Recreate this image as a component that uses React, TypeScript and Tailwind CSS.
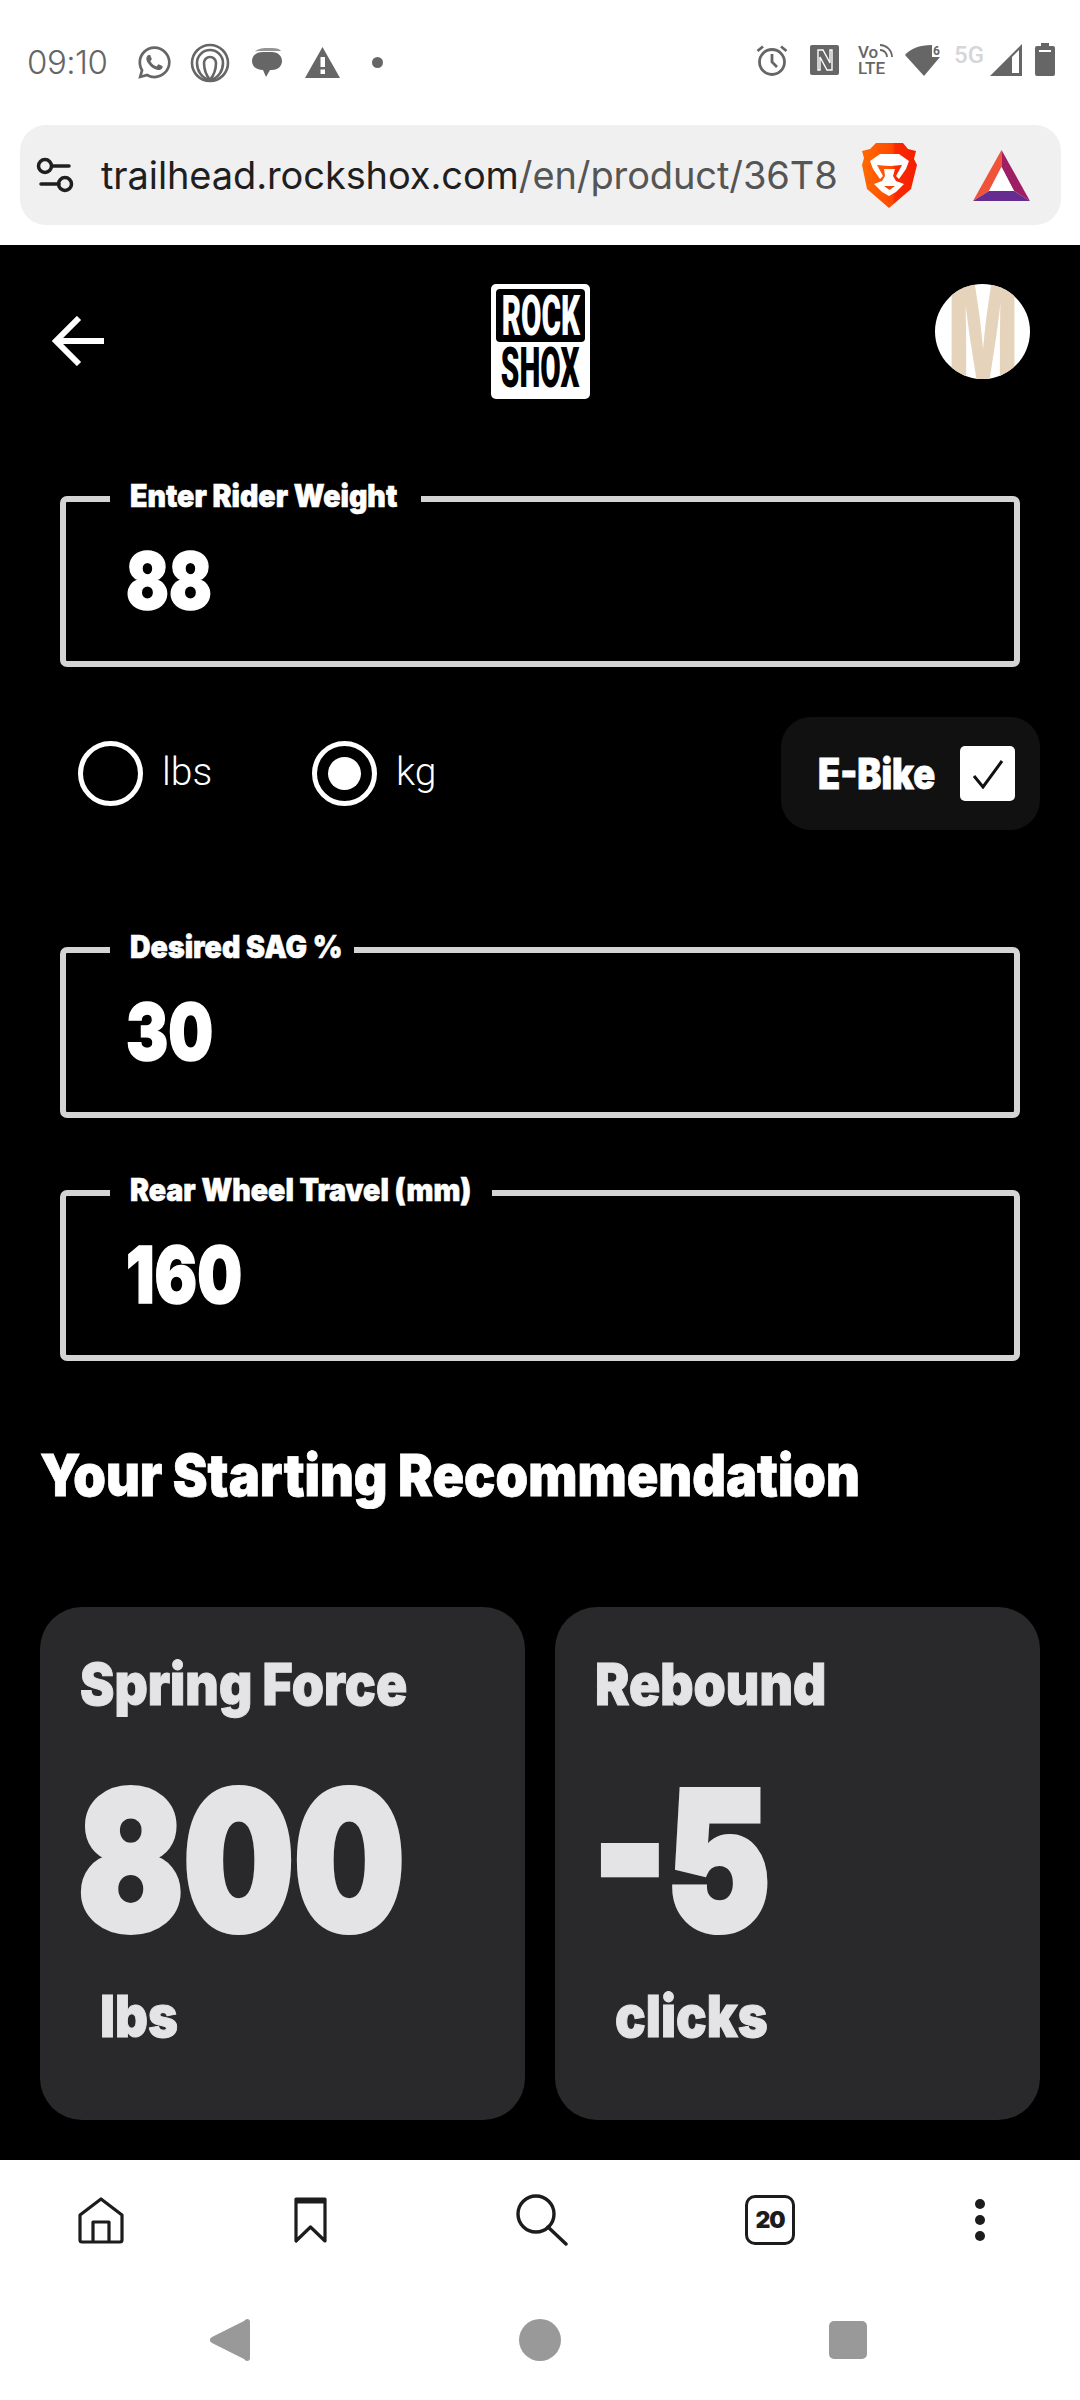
import { FaWhatsapp } from 'react-icons/fa'

const heavy = "font-['Inter',sans-serif] font-black"

function Field({ label, value, labelWidth, className }: { label: string; value: string; labelWidth: string; className: string }) {
  return (
    <div className={`relative h-[171px] rounded-[7px] border-[6px] border-[#d4d4d4] pl-[60px] pt-[36px] ${className}`}>
      {/* label sits over the top border and cuts it */}
      <div className={`absolute -top-[25px] left-[44px] h-[42px] bg-black ${labelWidth}`}>
        <span className={`${heavy} ml-[20px] inline-block origin-left scale-x-[0.92] whitespace-nowrap text-[31px] leading-[38px] text-white [-webkit-text-stroke:0.6px_currentColor]`}>{label}</span>
      </div>
      <span className={`${heavy} inline-block origin-left scale-x-[0.8] text-[79px] leading-[85px] text-white [-webkit-text-stroke:1.5px_currentColor]`}>{value}</span>
    </div>
  )
}

function Radio({ label, checked, className }: { label: string; checked?: boolean; className: string }) {
  return (
    <div className={`flex items-center ${className}`}>
      <div className="flex h-[65px] w-[65px] items-center justify-center rounded-full border-[5px] border-white">
        {checked && <div className="h-[33px] w-[33px] rounded-full bg-white" />}
      </div>
      <span className="ml-[19px] -mt-[3px] font-['Roboto',sans-serif] text-[39px] font-light text-white">{label}</span>
    </div>
  )
}

function ResultCard({ title, value, unit, unitClass }: { title: string; value: string; unit: string; unitClass: string }) {
  return (
    <div className="h-[513px] w-[485px] rounded-[42px] bg-[#29292b] text-[#e4e4e7]">
      <div className={`${heavy} ml-[40px] mt-[43px] origin-left scale-x-[0.89] whitespace-nowrap text-[58px] leading-[68px] [-webkit-text-stroke:1px_currentColor]`}>{title}</div>
      <div className={`${heavy} ml-[38px] mt-[42px] origin-left scale-x-[0.81] text-[192px] leading-[200px] [-webkit-text-stroke:6px_currentColor]`}>{value}</div>
      <div className={`${heavy} mt-[22px] origin-left scale-x-[0.88] text-[58px] leading-[68px] [-webkit-text-stroke:1px_currentColor] ${unitClass}`}>{unit}</div>
    </div>
  )
}

function StatusLeft() {
  return (
    <div className="-mt-[5px] flex items-center">
      <span className="ml-[27px] w-[82px] font-['Inter',sans-serif] text-[33px] font-light tracking-[-0.5px] text-[#666]">09:10</span>
      <FaWhatsapp className="ml-[27px] text-[#666]" size={37} />
      <svg className="ml-[17px]" width="40" height="40" viewBox="0 0 40 40" fill="none" stroke="#666" strokeWidth="2.6">
        <circle cx="20" cy="20" r="18" />
        <path d="M20 37C11 35 7 27 7 20a13 13 0 0 1 26 0c0 7-4 15-13 17" />
        <path d="M20 37c-4-5-6-11-6-17a6 6 0 0 1 12 0c0 6-2 12-6 17" />
      </svg>
      <svg className="ml-[21px]" width="32" height="32" viewBox="0 0 32 32" fill="#666">
        <path d="M4 5c2-3 6-4 12-4h5c5 0 8 1 9 3H8C6 4 5 4 4 5z" opacity="0.7" />
        <path d="M1 14c0-6 5-9 11-9h9c6 0 10 4 10 9s-4 9-10 9h-2l-4 7-3-7c-6 0-11-3-11-9z" />
      </svg>
      <svg className="ml-[22px]" width="35" height="31" viewBox="0 0 35 31">
        <path d="M17.5 0 35 31H0z" fill="#666" />
        <rect x="15.5" y="10" width="4.5" height="10" fill="#fff" />
        <rect x="15.5" y="22.5" width="4.5" height="4.5" fill="#fff" />
      </svg>
      <div className="ml-[32px] h-[11px] w-[11px] rounded-full bg-[#666]" />
    </div>
  )
}

function StatusRight() {
  return (
    <div className="flex items-center">
      <svg width="32" height="32" viewBox="0 0 32 32" fill="none" stroke="#666" strokeWidth="2.8">
        <circle cx="16" cy="18" r="12.5" />
        <path d="M16 10v8l5 5M1.5 7 7 2.5M30.5 7 25 2.5" />
      </svg>
      <svg className="ml-[22px]" width="29" height="30" viewBox="0 0 29 30">
        <rect width="29" height="30" rx="2" fill="#666" />
        <path d="M8 5h5l7 13V5h2v20h-5L10 12v13H8z" fill="none" stroke="#fff" strokeWidth="1.4" />
      </svg>
      <div className="ml-[19px] flex w-[35px] flex-col font-['Roboto',sans-serif] text-[17px] font-medium leading-[16px] text-[#666]">
        <span className="relative">
          Vo
          <svg className="absolute right-0 top-0" width="14" height="14" viewBox="0 0 14 14" fill="none" stroke="#666" strokeWidth="1.8">
            <path d="M1 1c6 0 12 5 12 12M1 6c4 0 7 3 7 7" />
          </svg>
        </span>
        <span>LTE</span>
      </div>
      <svg className="ml-[12px]" width="38" height="32" viewBox="0 0 38 32">
        <path d="M0 11C5 5 14 1 27 1v12h8L19 32z" fill="#666" />
        <text x="28" y="11" fontSize="12" fontWeight="700" fill="#666" fontFamily="Roboto, sans-serif">6</text>
      </svg>
      <span className="ml-[11px] w-[30px] font-['Roboto',sans-serif] text-[24px] font-medium leading-none text-[#d6d6d6] -mt-[9px]">5G</span>
      <svg className="ml-[6px]" width="32" height="32" viewBox="0 0 32 32">
        <path d="M32 0v32H0z" fill="#666" />
        <path d="M22 13v16h7V6z" fill="#fff" />
      </svg>
      <svg className="ml-[13px]" width="20" height="33" viewBox="0 0 20 33">
        <path d="M6 0h8v3h4a2 2 0 0 1 2 2v26a2 2 0 0 1-2 2H2a2 2 0 0 1-2-2V5a2 2 0 0 1 2-2h4z" fill="#666" />
        <rect x="4" y="7" width="12" height="2" fill="#fff" />
      </svg>
    </div>
  )
}

function UrlBar() {
  return (
    <div className="mx-[20px] flex h-[100px] w-[1041px] items-center rounded-[26px] bg-[#f1f0f1]">
      <svg className="ml-[16px] shrink-0" width="38" height="36" viewBox="0 0 38 36" fill="none" stroke="#1f1f1f" strokeWidth="3.5" strokeLinecap="round">
        <circle cx="9" cy="9" r="6.5" />
        <path d="M16 9h17M5 27h18" />
        <circle cx="29" cy="27" r="6.5" />
      </svg>
      <div className="ml-[27px] w-[735px] whitespace-nowrap font-['Inter',sans-serif] text-[38px] font-normal tracking-[-0.1px] text-[#1f1f1f]">
        trailhead.rockshox.com<span className="text-[#555]">/en/product/36T8</span>
      </div>
      <svg className="ml-[26px] shrink-0" width="55" height="65" viewBox="0 0 55 65">
        <defs>
          <linearGradient id="brave" x1="0" x2="1" y1="0" y2="0">
            <stop offset="0" stopColor="#ff6a00" />
            <stop offset="0.55" stopColor="#ff4a00" />
            <stop offset="0.6" stopColor="#fb2a00" />
            <stop offset="1" stopColor="#f31f00" />
          </linearGradient>
        </defs>
        <path d="M14 0h27l5 6 8 2-2 8 3 6-6 24-22 19L5 46 0 22l2-7L0 8l8-2z" fill="url(#brave)" />
        <path d="M8 18 18 11h19l10 7-3 8-7 10-3-3 6-11-11 1h-3L15 22l6 11-3 3L11 26z" fill="#fff" />
        <path d="M22 26h11l-2 7 3 5 8 3-8 8-7 4-7-4-8-8 8-3 3-5z" fill="#fff" />
        <path d="M22 43h11l-5.500 4z" fill="#f0490a" />
      </svg>
      <svg className="ml-[56px] shrink-0" width="57" height="51" viewBox="0 0 57 51">
        <path d="M28.500 0 0 51l16-10L28.500 17z" fill="#f0523a" />
        <path d="M28.500 0V17L41 41l16 10z" fill="#9e1f63" />
        <path d="M16 41 0 51h57L41 41z" fill="#662d91" />
        <path d="M28.500 17 16 41h25z" fill="#fff" />
      </svg>
    </div>
  )
}

function Logo() {
  return (
    <div className="flex h-[115px] w-[99px] flex-col items-center rounded-[5px] bg-white p-[5px]">
      <div className="flex h-[53px] w-[89px] shrink-0 items-center justify-center rounded-[4px] bg-black">
        <span className="inline-block scale-x-[0.53] font-['Roboto',sans-serif] text-[56px] font-black leading-[46px] text-white">ROCK</span>
      </div>
      <div className="flex h-[52px] shrink-0 items-center justify-center">
        <span className="inline-block scale-x-[0.53] font-['Roboto',sans-serif] text-[56px] font-black leading-[46px] text-black">SHOX</span>
      </div>
    </div>
  )
}

function BottomBar() {
  return (
    <div className="h-[240px] bg-white">
      <div className="flex h-[120px] items-center">
        <svg className="ml-[78px]" width="46" height="47" viewBox="0 0 46 47" fill="none" stroke="#1c1c1c" strokeWidth="3.2" strokeLinejoin="round">
          <path d="M2 18 23 2l21 16v25a2 2 0 0 1-2 2H4a2 2 0 0 1-2-2z" />
          <path d="M15 45V25h16v20" />
        </svg>
        <svg className="ml-[170px]" width="33" height="46" viewBox="0 0 33 46" fill="none" stroke="#1c1c1c" strokeWidth="3.2" strokeLinejoin="round">
          <path d="M2 2h29v42L16.500 30 2 44zM2 5h29" />
        </svg>
        <svg className="ml-[189px]" width="52" height="52" viewBox="0 0 52 52" fill="none" stroke="#1c1c1c" strokeWidth="3.4" strokeLinecap="round">
          <circle cx="20" cy="20" r="18" />
          <path d="M32 33 50 50" />
        </svg>
        <div className="ml-[177px] flex h-[50px] w-[50px] items-center justify-center rounded-[10px] border-[3.5px] border-[#1c1c1c] font-['Inter',sans-serif] text-[23px] font-black tracking-[-1px] text-[#1c1c1c]">20</div>
        <div className="ml-[180px] flex flex-col gap-[6px]">
          <div className="h-[10px] w-[10px] rounded-full bg-[#1c1c1c]" />
          <div className="h-[10px] w-[10px] rounded-full bg-[#1c1c1c]" />
          <div className="h-[10px] w-[10px] rounded-full bg-[#1c1c1c]" />
        </div>
      </div>
      <div className="flex h-[120px] items-start pt-[39px]">
        <svg className="ml-[210px]" width="40" height="42" viewBox="0 0 40 42">
          <path d="M37 0c2 0 3 1 3 3v36c0 2-1 3-3 3-1 0-2-1-3-2L2 24c-3-2-3-4 0-6L34 2c1-1 2-2 3-2z" fill="#999" />
        </svg>
        <div className="ml-[269px] h-[42px] w-[42px] rounded-full bg-[#999]" />
        <div className="ml-[268px] mt-[2px] h-[38px] w-[38px] rounded-[5px] bg-[#999]" />
      </div>
    </div>
  )
}

export default function App() {
  return (
    <div className="h-[2400px] w-[1080px] overflow-hidden bg-white">
      {/* browser chrome */}
      <div className="flex h-[125px] items-start justify-between pr-[25px] pt-[43px]">
        <StatusLeft />
        <StatusRight />
      </div>
      <UrlBar />
      <div className="h-[20px]" />

      <main className="h-[1915px] bg-black">
        <div className="flex items-start pt-[39px]">
          <svg className="ml-[52px] mt-[32px]" width="52" height="50" viewBox="0 0 52 50" fill="none" stroke="#fff" strokeWidth="6">
            <path d="M27 2 4 25l23 23M4 25h48" />
          </svg>
          <div className="ml-[387px]">
            <Logo />
          </div>
          <div className="relative ml-[345px] flex h-[95px] w-[95px] items-center justify-center overflow-hidden rounded-full bg-white">
            <span className="inline-block scale-x-[0.52] font-['Inter',sans-serif] text-[140px] font-black leading-none text-[#e6d3bb]">M</span>
          </div>
        </div>

        <div className="mt-[97px] px-[60px]">
          <Field label="Enter Rider Weight" value="88" labelWidth="w-[311px]" className="" />
        </div>

        <div className="mt-[50px] flex h-[113px] items-center pl-[78px] pr-[40px]">
          <Radio label="lbs" className="w-[234px]" />
          <Radio label="kg" checked className="" />
          <div className="ml-auto flex h-[113px] w-[259px] items-center rounded-[30px] bg-[#111]">
            <span className={`${heavy} ml-[37px] w-[142px] origin-left scale-x-[0.86] whitespace-nowrap text-[42px] text-white [-webkit-text-stroke:0.8px_currentColor]`}>E-Bike</span>
            <div className="flex h-[55px] w-[55px] items-center justify-center rounded-[5px] bg-white">
              <svg width="32" height="30" viewBox="0 0 32 30" fill="none" stroke="#111" strokeWidth="3">
                <path d="M2 17l9 11L30 2" />
              </svg>
            </div>
          </div>
        </div>

        <div className="mt-[117px] px-[60px]">
          <Field label="Desired SAG %" value="30" labelWidth="w-[244px]" className="" />
          <Field label="Rear Wheel Travel (mm)" value="160" labelWidth="w-[382px]" className="mt-[72px]" />
        </div>

        <h1 className={`${heavy} ml-[40px] mt-[80px] origin-left scale-x-[0.9] whitespace-nowrap text-[58px] leading-[68px] text-white [-webkit-text-stroke:0.8px_currentColor]`}>Your Starting Recommendation</h1>

        <div className="ml-[40px] mt-[98px] flex gap-[30px]">
          <ResultCard title="Spring Force" value="800" unit="lbs" unitClass="ml-[60px]" />
          <ResultCard title="Rebound" value="-5" unit="clicks" unitClass="ml-[60px]" />
        </div>
      </main>

      <BottomBar />
    </div>
  )
}
